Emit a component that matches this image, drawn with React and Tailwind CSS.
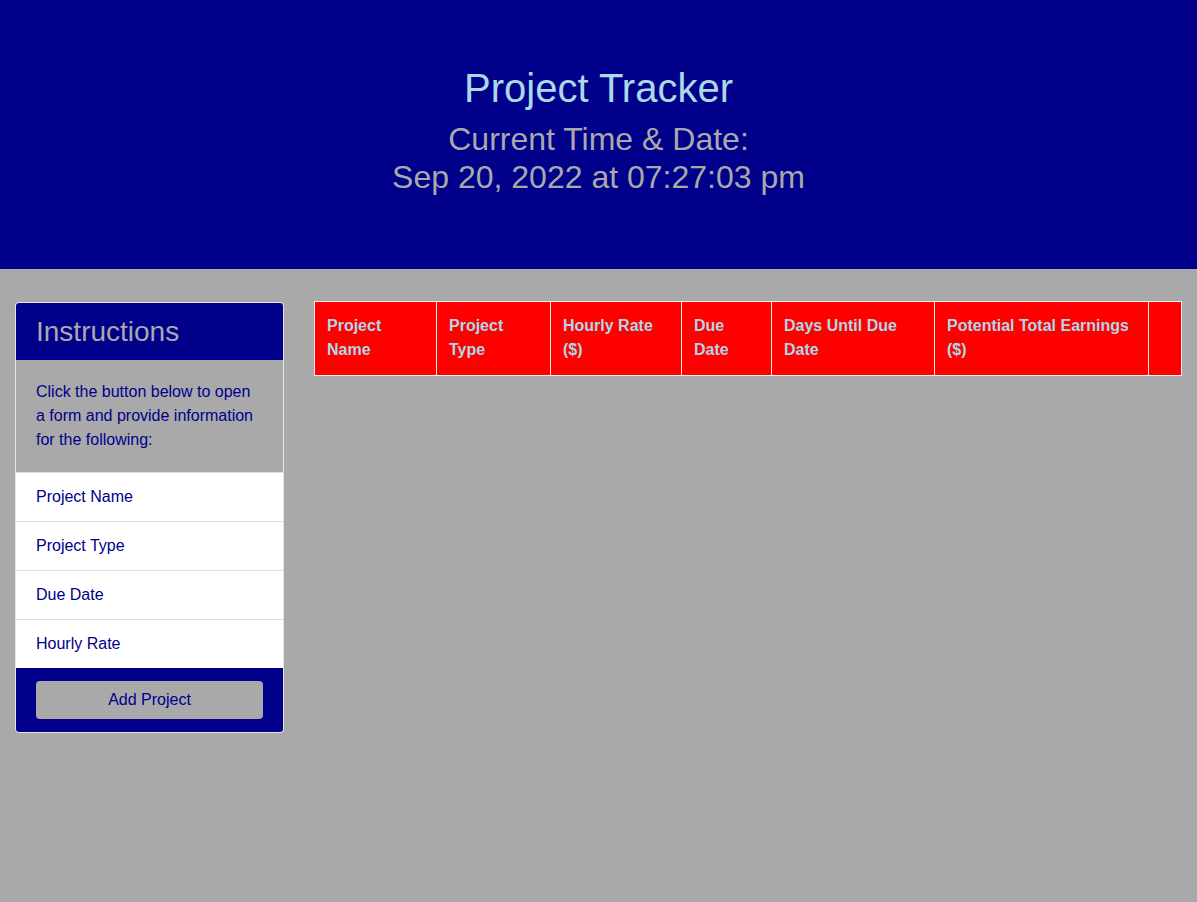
import React from "react";

const cols = [
  { w: 122, label: ["Project", "Name"] },
  { w: 114, label: ["Project", "Type"] },
  { w: 131, label: ["Hourly Rate", "($)"] },
  { w: 90, label: ["Due", "Date"] },
  { w: 163, label: ["Days Until Due", "Date"] },
  { w: 214, label: ["Potential Total Earnings", "($)"] },
  { w: 33, label: [] },
];

export default function App() {
  return (
    <div className="min-h-[902px] bg-[#a9a9a9] font-['Liberation_Sans',Arial,sans-serif]">
      <header className="bg-[#00008b] h-[269px] pt-16 text-center">
        <h1 className="text-[40px] leading-[48px] text-[#add8e6] mb-2">Project Tracker</h1>
        <h2 className="text-[32px] leading-[38px] text-[#a9a9a9]">
          Current Time &amp; Date:
          <br />
          Sep 20, 2022 at 07:27:03 pm
        </h2>
      </header>
      <main className="flex items-start gap-[30px] pl-[15px] pr-4 pt-8">
        <div className="w-[269px] shrink-0 mt-px border border-[#e5e5e5] rounded overflow-hidden bg-white">
          <div className="bg-[#00008b] px-5 py-3 text-[28px] leading-[33px] text-[#a9a9a9]">Instructions</div>
          <div className="bg-[#a9a9a9] p-5 text-base leading-6 text-[#00008b]">
            Click the button below to open a form and provide information for the following:
          </div>
          {["Project Name", "Project Type", "Due Date", "Hourly Rate"].map((t) => (
            <div key={t} className="px-5 py-3 text-base leading-6 text-[#00008b] bg-white border-t border-[#dedede]">
              {t}
            </div>
          ))}
          <div className="bg-[#00008b] px-5 pt-[13px] pb-[13px]">
            <button className="w-full h-[38px] rounded bg-[#a9a9a9] text-[#00008b] text-base">Add Project</button>
          </div>
        </div>
        <div className="flex-1">
          <table className="border-collapse table-fixed w-[867px]">
            <colgroup>
              {cols.map((c, i) => (
                <col key={i} style={{ width: c.w }} />
              ))}
            </colgroup>
            <thead>
              <tr className="bg-[#ff0000]">
                {cols.map((c, i) => (
                  <th
                    key={i}
                    className="border border-[#f0f0f0] px-3 pt-3 pb-[13px] text-left align-top font-bold text-base leading-6 text-[#add8e6]"
                  >
                    {c.label.length ? (
                      <>
                        {c.label[0]}
                        <br />
                        {c.label[1]}
                      </>
                    ) : (
                      <>
                        &nbsp;
                        <br />
                        &nbsp;
                      </>
                    )}
                  </th>
                ))}
              </tr>
            </thead>
          </table>
        </div>
      </main>
    </div>
  );
}
